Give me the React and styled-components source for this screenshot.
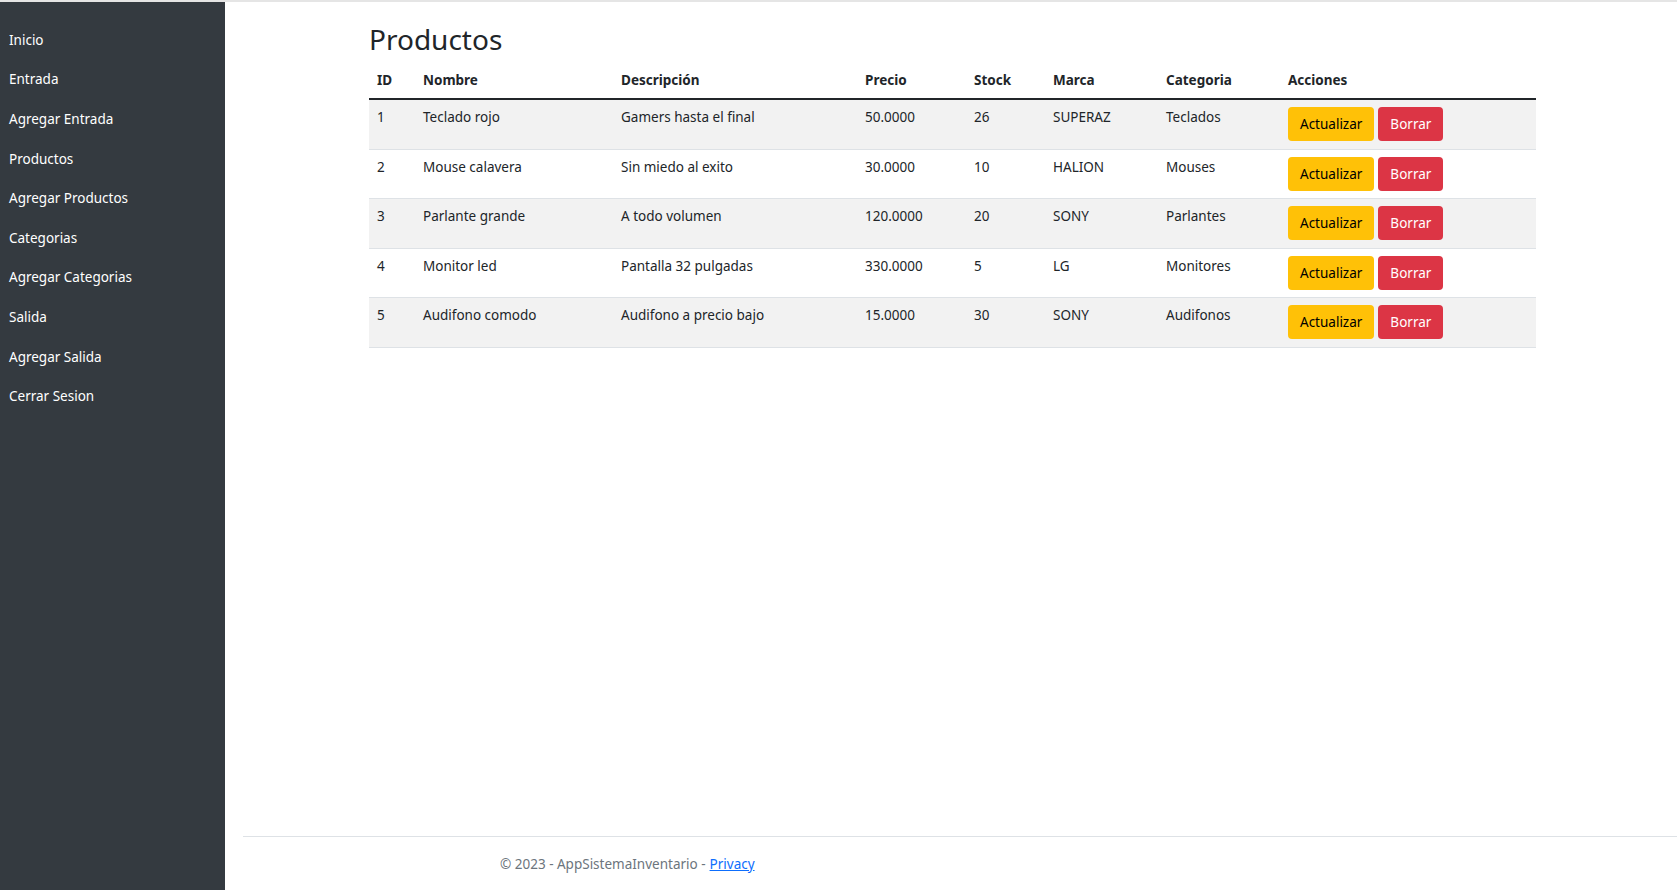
import styled, { createGlobalStyle } from 'styled-components'

const GlobalStyle = createGlobalStyle`
    *, *::before, *::after {
        box-sizing:border-box;
    }
    html, body {
        margin:0;
        padding:0;
    }
    body {
        font-family:"Noto Sans", "Open Sans", sans-serif;
        font-size:13.5px;
        color:#212529;
        background:#fff;
    }
`

const Page = styled.div`
    display:flex;
    min-height:890px;
    border-top:2px solid #e5e5e5;
`

const Sidebar = styled.nav`
    width:225px;
    flex-shrink:0;
    background-color:#343a40;
    padding-top:18px;
    display:flex;
    flex-direction:column;
`

const NavLink = styled.a`
    height:39.6px;
    display:flex;
    align-items:center;
    padding-left:9px;
    color:#fff;
    font-size:13.5px;
    text-decoration:none;
    cursor:pointer;
`

const Main = styled.div`
    flex:1;
    display:flex;
    flex-direction:column;
`

const Content = styled.main`
    flex:1;
    width:1167px;
    margin-left:144px;
`

const Title = styled.h1`
    font-size:28px;
    font-weight:400;
    line-height:36px;
    margin:19px 0 5px;
`

const Table = styled.table`
    width:100%;
    border-collapse:collapse;
    table-layout:fixed;
`

const Th = styled.th`
    width:${props => props.$w}px;
    text-align:left;
    font-weight:700;
    padding:8px 8px 7px;
    line-height:21px;
    border-bottom:2px solid #212529;
`

const Row = styled.tr`
    background-color:${props => props.$striped ? "#f2f2f2" : "transparent"};
    border-bottom:1px solid #dee2e6;
`

const Td = styled.td`
    padding:7px 8px 7.5px;
    line-height:21px;
    vertical-align:top;
`

const Button = styled.button`
    height:34px;
    padding:0 12px;
    margin-right:4px;
    border:none;
    border-radius:4px;
    font-family:inherit;
    font-size:13.5px;
    cursor:pointer;
    background-color:${props => props.$variant === "danger" ? "#dc3545" : "#ffc107"};
    color:${props => props.$variant === "danger" ? "#fff" : "#000"};
`

const Footer = styled.footer`
    margin-left:18px;
    border-top:1px solid #dee2e6;
    height:54px;
    display:flex;
    align-items:center;
    padding-left:257px;
    color:#6c757d;
    font-size:13.5px;
`

const FooterLink = styled.a`
    color:#0d6efd;
    text-decoration:underline;
    margin-left:4px;
`

const links = [
    "Inicio", "Entrada", "Agregar Entrada", "Productos", "Agregar Productos",
    "Categorias", "Agregar Categorias", "Salida", "Agregar Salida", "Cerrar Sesion"
]

const columns = [
    ["ID", 46], ["Nombre", 198], ["Descripción", 244], ["Precio", 109],
    ["Stock", 79], ["Marca", 113], ["Categoria", 122], ["Acciones", 256]
]

const products = [
    [1, "Teclado rojo", "Gamers hasta el final", "50.0000", 26, "SUPERAZ", "Teclados"],
    [2, "Mouse calavera", "Sin miedo al exito", "30.0000", 10, "HALION", "Mouses"],
    [3, "Parlante grande", "A todo volumen", "120.0000", 20, "SONY", "Parlantes"],
    [4, "Monitor led", "Pantalla 32 pulgadas", "330.0000", 5, "LG", "Monitores"],
    [5, "Audifono comodo", "Audifono a precio bajo", "15.0000", 30, "SONY", "Audifonos"],
]

const App = () => {
  return (
    <Page>
        <GlobalStyle/>
        <Sidebar>
            {links.map(l => <NavLink key={l}>{l}</NavLink>)}
        </Sidebar>
        <Main>
            <Content>
                <Title>Productos</Title>
                <Table>
                    <thead>
                        <tr>
                            {columns.map(([name, w]) => <Th key={name} $w={w}>{name}</Th>)}
                        </tr>
                    </thead>
                    <tbody>
                        {products.map((p, i) => (
                            <Row key={p[0]} $striped={i % 2 === 0}>
                                {p.map((v, j) => <Td key={j}>{v}</Td>)}
                                <Td>
                                    <Button>Actualizar</Button>
                                    <Button $variant="danger">Borrar</Button>
                                </Td>
                            </Row>
                        ))}
                    </tbody>
                </Table>
            </Content>
            <Footer>
                © 2023 - AppSistemaInventario - <FooterLink>Privacy</FooterLink>
            </Footer>
        </Main>
    </Page>
  )
}

export default App
